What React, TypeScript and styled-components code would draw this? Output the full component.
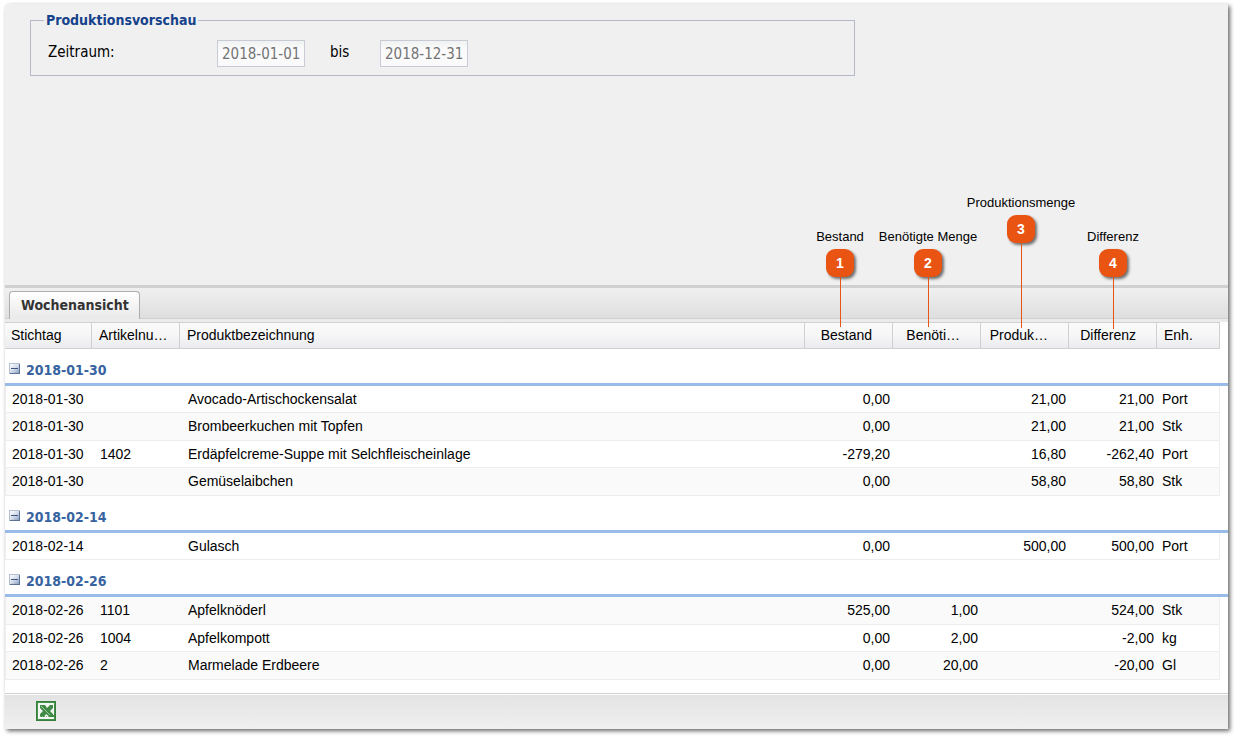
import React, { useState } from "react";
import styled, { createGlobalStyle } from "styled-components";

const tahoma = `Tahoma, "DejaVu Sans Condensed", "DejaVu Sans", sans-serif`;
const arial = `"Liberation Sans", Arial, sans-serif`;

const GlobalStyle = createGlobalStyle`
  *, *::before, *::after { box-sizing: border-box; }
  body {
    margin: 0;
    background: #fff;
    color: #000;
    font-family: ${arial};
    font-size: 14px;
  }
`;

const Window = styled.main`
  position: relative;
  margin: 4px 9px 9px 5px;
  background: #f0f0f0;
  border-top-left-radius: 4px;
  box-shadow: 2px 2px 4px rgba(0, 0, 0, 0.6);
`;

const FilterPanel = styled.form`
  min-height: 281px;
  padding: 7px 25px;
`;

const FieldGroup = styled.fieldset`
  display: block;
  max-width: 825px;
  min-width: 0;
  margin: 0;
  padding: 11px 17px 8px;
  border: 1px solid #b5b8c8;
`;

const GroupLegend = styled.legend`
  margin-left: -4px;
  padding: 0 2px;
  color: #15428b;
  font: bold 14px/18px ${tahoma};
`;

const FieldRow = styled.div`
  display: flex;
  align-items: center;
  height: 27px;
  font: 15px/20px ${tahoma};
`;

const FieldLabel = styled.label<{ $width: number }>`
  flex: 0 0 ${(p) => p.$width}px;
  padding-bottom: 4px;
`;

const DateInput = styled.input`
  width: 88px;
  height: 27px;
  margin: 0 25px 0 0;
  padding: 0 4px;
  border: 1px solid #c8cad6;
  background: linear-gradient(#f0f2f2, #fafafa 8px);
  color: #747474;
  font: 15px/20px ${tahoma};
`;

const TabStrip = styled.div`
  display: flex;
  align-items: flex-end;
  height: 37px;
  padding: 0 4px 3px;
  border-top: 3px solid #d0d0d0;
  background:
    linear-gradient(#d0d0d0, #d0d0d0) 0 30px / 100% 1px no-repeat,
    linear-gradient(#ebebeb, #ebebeb) 0 31px / 100% 3px no-repeat,
    linear-gradient(#f0f0f0, #dcdcdc);
`;

const Tab = styled.button`
  height: 28px;
  padding: 0 10px 2px 11px;
  border: 1px solid #adadad;
  border-bottom: 0;
  border-radius: 4px 4px 0 0;
  background: linear-gradient(#fff, #ebebeb 24px);
  color: #333;
  font: bold 14px/20px ${tahoma};
`;

const GridBody = styled.section`
  padding-bottom: 13px;
  background: #fff;
`;

const Grid = styled.table`
  width: 100%;
  border-spacing: 0;
  table-layout: fixed;
`;

const Column = styled.col<{ $width?: number }>`
  width: ${(p) => (p.$width ? `${p.$width}px` : "auto")};
`;

const HeadCell = styled.th<{ $numeric?: boolean }>`
  height: 27px;
  padding: 0 ${(p) => (p.$numeric ? 20 : 4)}px 2px 7px;
  border: solid #d0d0d0;
  border-width: 1px 1px 1px 0;
  background: linear-gradient(#fafafa, #f6f6f7 50%, #eaebee);
  font-weight: normal;
  line-height: 16px;
  text-align: ${(p) => (p.$numeric ? "right" : "left")};
  white-space: nowrap;

  &:first-child { padding-left: 6px; }
`;

const GroupCell = styled.th`
  height: 37px;
  padding: 8px 4px 0;
  border-bottom: 3px solid #99bbe8;
  text-align: left;
`;

const GroupTitle = styled.div`
  display: flex;
  align-items: center;
  gap: 6px;
  color: #3764a0;
  font: bold 14px/18px ${tahoma};
`;

const CollapseButton = styled.button`
  display: block;
  width: 11px;
  height: 15px;
  padding: 0 0 4px;
  border: 0;
  background: none;
`;

const DataRow = styled.tr<{ $striped: boolean }>`
  height: ${(p) => (p.$striped ? 28 : 27)}px;
  --row-fill: ${(p) => (p.$striped ? "#fafafa" : "#fff")};
`;

const Cell = styled.td<{ $numeric?: boolean }>`
  padding: 5px 3px 0 8px;
  border-bottom: 1px solid #ededed;
  background: var(--row-fill);
  line-height: 16px;
  text-align: ${(p) => (p.$numeric ? "right" : "left")};
  vertical-align: top;
  white-space: nowrap;

  &:first-child {
    padding-left: 6px;
    border-left: 1px solid #ededed;
  }
`;

const UnitCell = styled(Cell)`
  padding-left: 5px;
  border-right: 1px solid #ededed;
`;

const Gutter = styled.td`
  padding: 0;
`;

const Toolbar = styled.footer`
  display: flex;
  align-items: center;
  height: 36px;
  padding: 0 31px 2px;
  border-top: 1px solid #d0d0d0;
  background: linear-gradient(#e3e3e3, #f0f0f0);
  box-shadow: inset 0 1px #fff;
`;

const ToolButton = styled.button`
  width: 20px;
  height: 20px;
  padding: 0;
  border: 0;
  background: none;

  svg { display: block; }
`;

const Callout = styled.div<{ $right: number; $top: number }>`
  position: absolute;
  top: ${(p) => p.$top}px;
  right: ${(p) => p.$right}px;
  display: flex;
  flex-direction: column;
  align-items: center;
  width: 110px;
  pointer-events: none;
`;

const CalloutLabel = styled.span`
  margin-bottom: 4px;
  font: 13px/16px ${arial};
  white-space: nowrap;
`;

const CalloutBadge = styled.span`
  width: 28px;
  height: 28px;
  border-radius: 9px;
  background: #e95412;
  box-shadow: 2px 2px 3px rgba(0, 0, 0, 0.55);
  color: #fff;
  font: bold 14px/28px ${arial};
  text-align: center;
`;

const CalloutLine = styled.span<{ $length: number }>`
  width: 2px;
  height: ${(p) => p.$length}px;
  background: linear-gradient(#e95412, #e95412) right / 1px 100% no-repeat;
`;

type Item = {
  no?: string;
  name: string;
  stock: string;
  needed?: string;
  produced?: string;
  diff: string;
  unit: string;
  striped?: boolean;
};

const groups: { date: string; items: Item[] }[] = [
  {
    date: "2018-01-30",
    items: [
      { name: "Avocado-Artischockensalat", stock: "0,00", produced: "21,00", diff: "21,00", unit: "Port" },
      { name: "Brombeerkuchen mit Topfen", stock: "0,00", produced: "21,00", diff: "21,00", unit: "Stk", striped: true },
      { no: "1402", name: "Erdäpfelcreme-Suppe mit Selchfleischeinlage", stock: "-279,20", produced: "16,80", diff: "-262,40", unit: "Port" },
      { name: "Gemüselaibchen", stock: "0,00", produced: "58,80", diff: "58,80", unit: "Stk", striped: true },
    ],
  },
  {
    date: "2018-02-14",
    items: [{ name: "Gulasch", stock: "0,00", produced: "500,00", diff: "500,00", unit: "Port" }],
  },
  {
    date: "2018-02-26",
    items: [
      { no: "1101", name: "Apfelknöderl", stock: "525,00", needed: "1,00", diff: "524,00", unit: "Stk", striped: true },
      { no: "1004", name: "Apfelkompott", stock: "0,00", needed: "2,00", diff: "-2,00", unit: "kg" },
      { no: "2", name: "Marmelade Erdbeere", stock: "0,00", needed: "20,00", diff: "-20,00", unit: "Gl", striped: true },
    ],
  },
];

const callouts = [
  { label: "Bestand", right: 333, top: 225, line: 50 },
  { label: "Benötigte Menge", right: 245, top: 225, line: 50 },
  { label: "Produktionsmenge", right: 152, top: 191, line: 85 },
  { label: "Differenz", right: 60, top: 225, line: 52 },
];

function ToggleIcon({ open }: { open: boolean }) {
  return (
    <svg width="11" height="11" viewBox="0 0 11 11" shapeRendering="crispEdges" style={{ display: "block" }}>
      <defs>
        <linearGradient id="toggleFill" x1="0" y1="0" x2="1" y2="1">
          <stop offset="0" stopColor="#fff" />
          <stop offset="0.5" stopColor="#d5deeb" />
          <stop offset="1" stopColor="#8ba0c2" />
        </linearGradient>
      </defs>
      <rect width="11" height="11" fill="#b4bfd0" />
      <path d="M10 1h1v10H1v-1h9z" fill="#5d7194" />
      <rect x="1" y="1" width="9" height="9" fill="url(#toggleFill)" />
      <rect x="2" y="5" width="7" height="1" fill="#40557f" />
      {!open && <rect x="5" y="2" width="1" height="7" fill="#40557f" />}
    </svg>
  );
}

function SpreadsheetIcon() {
  return (
    <svg width="20" height="20" viewBox="0 0 20 20">
      <rect width="20" height="20" fill="#43934a" />
      <rect x="0.5" y="0.5" width="19" height="19" fill="none" stroke="#2c6b30" strokeDasharray="1 1" />
      <rect x="2" y="2" width="16" height="16" fill="#f2f7f1" />
      <path d="M4 4h5l2 3 3-3h3v3l-3 3 3 3v3h-3l-4-3-2 3H4v-3l3-3-3-3z" fill="#3f8a44" />
      <path d="M5 5l9 9" stroke="#a3cba3" strokeWidth="1" />
      <path d="M4 15.500h9" stroke="#7fb183" strokeDasharray="1 1" />
      <path d="M13 14h5v2h-5z" fill="#3f8a44" />
    </svg>
  );
}

export default function App() {
  const [closed, setClosed] = useState<string[]>([]);
  const toggle = (date: string) =>
    setClosed((c) => (c.includes(date) ? c.filter((d) => d !== date) : [...c, date]));

  return (
    <>
      <GlobalStyle />
      <Window>
        <FilterPanel>
          <FieldGroup>
            <GroupLegend>Produktionsvorschau</GroupLegend>
            <FieldRow>
              <FieldLabel htmlFor="from" $width={169}>Zeitraum:</FieldLabel>
              <DateInput id="from" defaultValue="2018-01-01" disabled />
              <FieldLabel htmlFor="to" $width={50}>bis</FieldLabel>
              <DateInput id="to" defaultValue="2018-12-31" disabled />
            </FieldRow>
          </FieldGroup>
        </FilterPanel>

        <TabStrip role="tablist">
          <Tab type="button" role="tab" aria-selected="true">Wochenansicht</Tab>
        </TabStrip>

        <GridBody>
          <Grid>
            <colgroup>
              <Column $width={87} />
              <Column $width={88} />
              <Column />
              <Column $width={88} />
              <Column $width={88} />
              <Column $width={88} />
              <Column $width={88} />
              <Column $width={63} />
              <Column $width={8} />
            </colgroup>
            <thead>
              <tr>
                <HeadCell scope="col">Stichtag</HeadCell>
                <HeadCell scope="col">Artikelnu…</HeadCell>
                <HeadCell scope="col">Produktbezeichnung</HeadCell>
                <HeadCell scope="col" $numeric>Bestand</HeadCell>
                <HeadCell scope="col" $numeric>Benöti…</HeadCell>
                <HeadCell scope="col" $numeric>Produk…</HeadCell>
                <HeadCell scope="col" $numeric>Differenz</HeadCell>
                <HeadCell scope="col">Enh.</HeadCell>
                <Gutter />
              </tr>
            </thead>
            {groups.map(({ date, items }) => {
              const open = !closed.includes(date);
              return (
                <tbody key={date}>
                  <tr>
                    <GroupCell colSpan={9} scope="rowgroup">
                      <GroupTitle>
                        <CollapseButton type="button" aria-label={date} aria-expanded={open} onClick={() => toggle(date)}>
                          <ToggleIcon open={open} />
                        </CollapseButton>
                        {date}
                      </GroupTitle>
                    </GroupCell>
                  </tr>
                  {open &&
                    items.map((item) => (
                      <DataRow key={item.name} $striped={!!item.striped}>
                        <Cell>{date}</Cell>
                        <Cell>{item.no}</Cell>
                        <Cell>{item.name}</Cell>
                        <Cell $numeric>{item.stock}</Cell>
                        <Cell $numeric>{item.needed}</Cell>
                        <Cell $numeric>{item.produced}</Cell>
                        <Cell $numeric>{item.diff}</Cell>
                        <UnitCell>{item.unit}</UnitCell>
                        <Gutter />
                      </DataRow>
                    ))}
                </tbody>
              );
            })}
          </Grid>
        </GridBody>

        <Toolbar>
          <ToolButton type="button" aria-label="Excel">
            <SpreadsheetIcon />
          </ToolButton>
        </Toolbar>

        {callouts.map((c, i) => (
          <Callout key={c.label} $right={c.right} $top={c.top}>
            <CalloutLabel>{c.label}</CalloutLabel>
            <CalloutBadge>{i + 1}</CalloutBadge>
            <CalloutLine $length={c.line} />
          </Callout>
        ))}
      </Window>
    </>
  );
}
